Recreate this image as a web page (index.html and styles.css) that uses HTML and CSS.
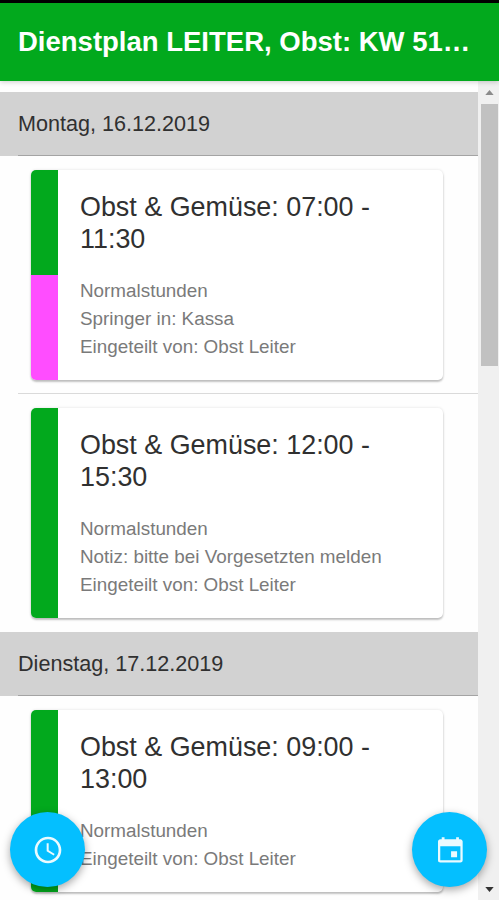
FILE: index.html
```html
<!DOCTYPE html>
<html lang="de">
<head>
    <meta charset="UTF-8">
    <meta name="viewport" content="width=device-width, initial-scale=1.0">
    <title>Dienstplan</title>
    <link rel="stylesheet" href="styles.css">
</head>
<body>

    <header class="toolbar">
        <h1>Dienstplan LEITER, Obst: KW 51…</h1>
    </header>

    <div class="content">
        <main class="schedule">
            <h2 class="day">Montag, 16.12.2019</h2>

            <div class="item">
                <div class="card">
                    <div class="stripe">
                        <span class="green"></span>
                        <span class="pink"></span>
                    </div>
                    <div class="card-body">
                        <h3>Obst &amp; Gemüse: 07:00 - 11:30</h3>
                        <p>Normalstunden</p>
                        <p>Springer in: Kassa</p>
                        <p>Eingeteilt von: Obst Leiter</p>
                    </div>
                </div>
            </div>

            <div class="item last">
                <div class="card">
                    <div class="stripe">
                        <span class="green"></span>
                    </div>
                    <div class="card-body">
                        <h3>Obst &amp; Gemüse: 12:00 - 15:30</h3>
                        <p>Normalstunden</p>
                        <p>Notiz: bitte bei Vorgesetzten melden</p>
                        <p>Eingeteilt von: Obst Leiter</p>
                    </div>
                </div>
            </div>

            <h2 class="day">Dienstag, 17.12.2019</h2>

            <div class="item last">
                <div class="card">
                    <div class="stripe">
                        <span class="green"></span>
                    </div>
                    <div class="card-body">
                        <h3>Obst &amp; Gemüse: 09:00 - 13:00</h3>
                        <p>Normalstunden</p>
                        <p>Eingeteilt von: Obst Leiter</p>
                    </div>
                </div>
            </div>
        </main>

        <div class="scrollbar">
            <svg class="arrow up" viewBox="0 0 10 6"><path d="M0 6 L5 0 L10 6 Z"/></svg>
            <div class="thumb"></div>
            <svg class="arrow down" viewBox="0 0 10 6"><path d="M0 0 L5 6 L10 0 Z"/></svg>
        </div>
    </div>

    <button class="fab fab-left" aria-label="Zeit">
        <svg viewBox="0 0 24 24"><path d="M11.99 2C6.47 2 2 6.48 2 12s4.47 10 9.99 10C17.52 22 22 17.52 22 12S17.52 2 11.99 2zM12 20c-4.42 0-8-3.58-8-8s3.58-8 8-8 8 3.58 8 8-3.58 8-8 8zm.5-13H11v6l5.25 3.15.75-1.23-4.5-2.67z"/></svg>
    </button>
    <button class="fab fab-right" aria-label="Kalender">
        <svg viewBox="0 0 24 24"><path d="M17.3 13h-4.5v4.5h4.5zM16.6 2.5v1.4H7.9V2.5H5.8v1.4h-1C3.7 3.9 3 4.7 3 5.7v13.9c0 1 .7 1.7 1.8 1.7h14.9c1 0 1.8-.7 1.8-1.7V5.7c0-1-.8-1.8-1.8-1.8h-1V2.5zM19.8 19.7H4.7V9.1h15.1z"/></svg>
    </button>

</body>
</html>
```
FILE: styles.css
```css
:root {
    --green: #02a91d;
    --pink: #ff4dff;
    --blue: #04bfff;
    --day-color: #d2d2d2;
}

* {
    box-sizing: border-box;
}

body {
    position: relative;
    display: flex;
    flex-direction: column;
    height: 900px;
    margin: 0;
    overflow: hidden;
    background: #fefefe;
    color: #303030;
    font-family: "Liberation Sans", Arial, sans-serif;
}

h1, h2, h3, p {
    margin: 0;
    font-weight: 400;
}

.toolbar {
    flex: none;
    height: 81px;
    padding: 0 18px;
    border-top: 3px solid #000;
    background: var(--green);
    box-shadow: 0 1px 5px rgba(0, 0, 0, 0.2);
    z-index: 1;
}

.toolbar h1 {
    color: #fff;
    font-size: 27.5px;
    font-weight: 700;
    line-height: 78px;
    white-space: nowrap;
}

.content {
    flex: 1;
    display: flex;
    min-height: 0;
}

.schedule {
    flex: 1;
    padding-top: 11px;
    overflow: hidden;
}

.day {
    height: 64px;
    padding-left: 18px;
    background: var(--day-color);
    font-size: 21.6px;
    line-height: 63px;
}

.day::after {
    content: "";
    display: block;
    height: 1px;
    background: #a4a4a4;
}

.item {
    height: 238px;
    margin-left: 18px;
    padding: 14px 35px 13px 13px;
    border-bottom: 1px solid #dadada;
}

.item.last {
    height: auto;
    padding-bottom: 14px;
    border-bottom: none;
}

.card {
    display: flex;
    min-height: 181px;
    border-radius: 5px;
    overflow: hidden;
    background: #fff;
    box-shadow: 0 2px 2px rgba(0, 0, 0, 0.22), 0 0 3px rgba(0, 0, 0, 0.12);
}

.stripe {
    display: flex;
    flex-direction: column;
    width: 27px;
}

.stripe span {
    flex: 1;
}

.green {
    background: var(--green);
}

.pink {
    background: var(--pink);
}

.card-body {
    flex: 1;
    padding: 21px 22px 19px;
}

.card-body h3 {
    margin-bottom: 22px;
    font-size: 26.9px;
    line-height: 32px;
}

.card-body p {
    color: #7a7a7a;
    font-size: 18.85px;
    line-height: 28px;
}

.scrollbar {
    display: flex;
    flex-direction: column;
    align-items: center;
    width: 21px;
    padding: 9px 0 8px 2px;
    background: #f0f0f0;
}

.arrow {
    width: 9px;
    height: 5px;
}

.up {
    fill: #8b8b8b;
}

.down {
    margin-top: auto;
    fill: #333;
}

.thumb {
    width: 17px;
    height: 262px;
    margin-top: 9px;
    background: #c1c1c1;
}

.fab {
    position: absolute;
    bottom: 13px;
    display: flex;
    align-items: center;
    justify-content: center;
    width: 75px;
    height: 75px;
    padding: 0;
    border: none;
    border-radius: 50%;
    background: var(--blue);
    box-shadow: 0 3px 8px rgba(0, 0, 0, 0.35);
}

.fab-left {
    left: 10px;
}

.fab-right {
    right: 12px;
}

.fab svg {
    width: 32px;
    height: 32px;
    fill: #eafaff;
}
```
